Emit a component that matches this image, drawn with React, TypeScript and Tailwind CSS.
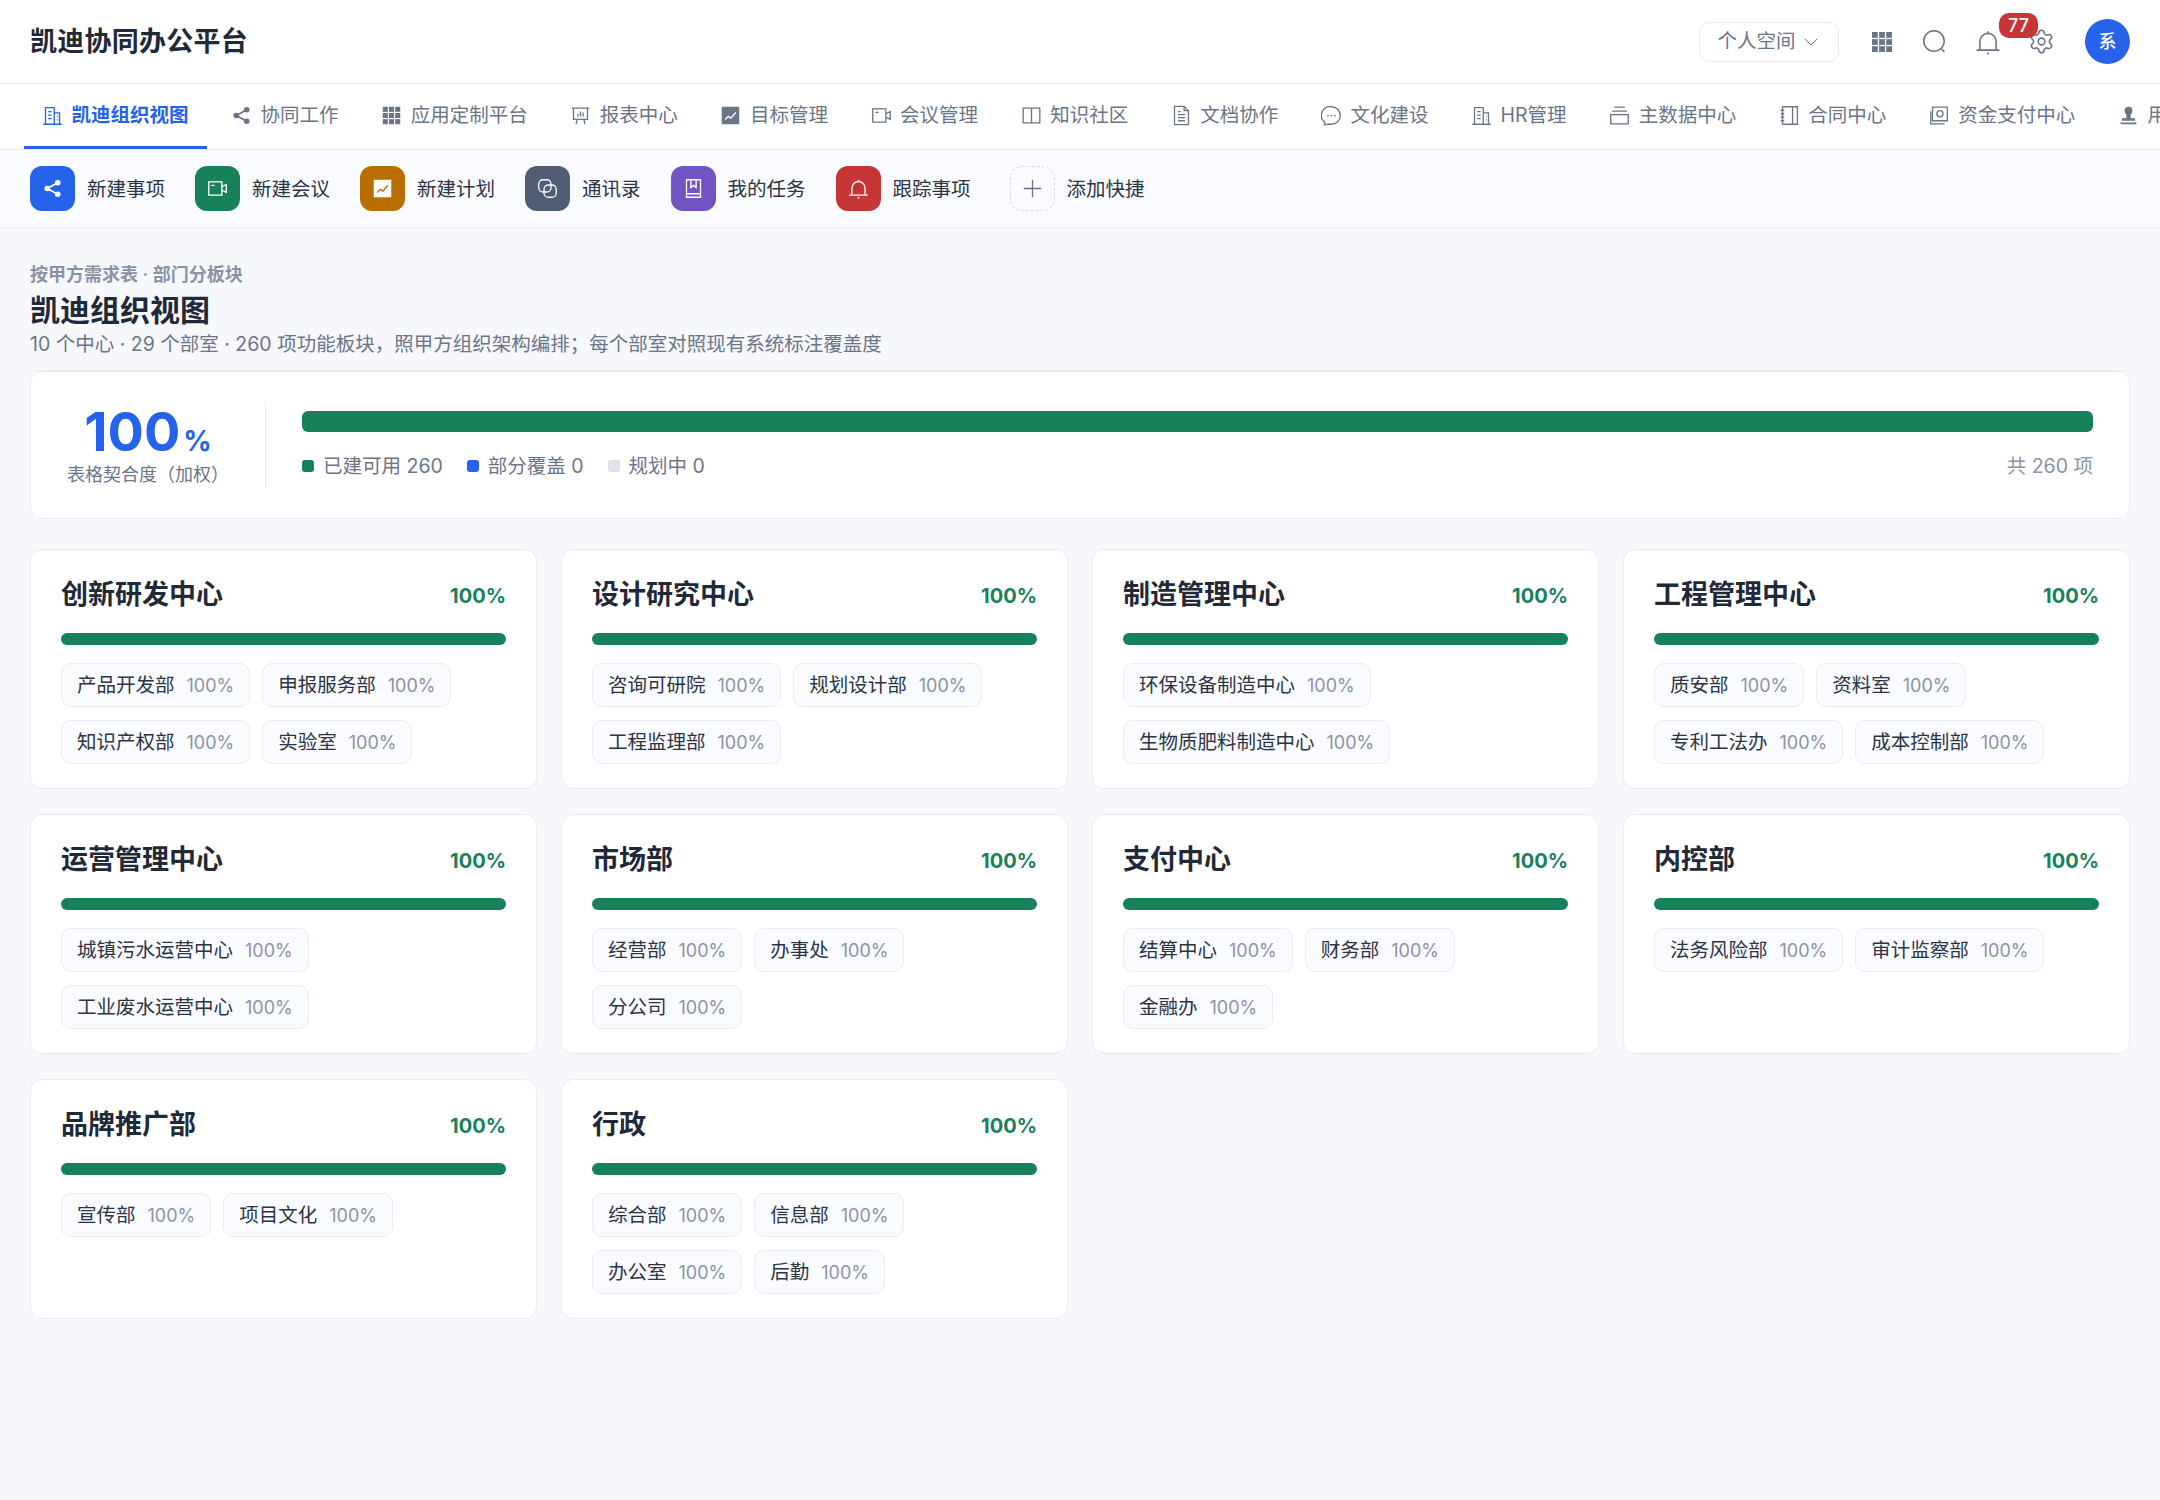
import React from 'react';
import { Settings, ChevronDown } from 'lucide-react';

// --- Icons ---

type IconProps = { className?: string };

const Svg: React.FC<IconProps & { children: React.ReactNode }> = ({ className, children }) => (
  <svg viewBox="0 0 24 24" fill="none" stroke="currentColor" strokeWidth="1.5" className={className}>{children}</svg>
);

const BuildingIcon = (p: IconProps) => (
  <Svg {...p}><path d="M1.5 22h21M4 22V3h10v19M14 9h6v13M7 7.5h4M7 11.5h4M7 15.5h4M17 13h1M17 17h1" /></Svg>
);
const ShareIcon = (p: IconProps) => (
  <Svg {...p}>
    <path d="M18 5.5 6 12l12 6.5" strokeWidth="2" />
    <circle cx="18" cy="5.5" r="3.2" fill="currentColor" stroke="none" />
    <circle cx="6" cy="12" r="3.2" fill="currentColor" stroke="none" />
    <circle cx="18" cy="18.5" r="3.2" fill="currentColor" stroke="none" />
  </Svg>
);
const GridIcon = (p: IconProps) => (
  <svg viewBox="0 0 24 24" fill="currentColor" className={p.className}>
    <rect x="2" y="2" width="5.8" height="5.8" /><rect x="9.1" y="2" width="5.8" height="5.8" /><rect x="16.2" y="2" width="5.8" height="5.8" />
    <rect x="2" y="9.1" width="5.8" height="5.8" /><rect x="9.1" y="9.1" width="5.8" height="5.8" /><rect x="16.2" y="9.1" width="5.8" height="5.8" />
    <rect x="2" y="16.2" width="5.8" height="5.8" /><rect x="9.1" y="16.2" width="5.8" height="5.8" /><rect x="16.2" y="16.2" width="5.8" height="5.8" />
  </svg>
);
const BoardIcon = (p: IconProps) => (
  <Svg {...p}><path d="M2 3.5h20M4 3.5v13h16v-13M8 16.5 7 22M16 16.5l1 5.5M9 13v-3M12 13V7.5M15 13V8.5" /></Svg>
);
const ChartIcon = (p: IconProps) => (
  <svg viewBox="0 0 24 24" className={p.className}>
    <rect x="2" y="2" width="20" height="20" rx="1" fill="currentColor" />
    <path d="M6 16.5l3.5-3.5 3 2L18 8.5" fill="none" stroke="#fff" strokeWidth="1.6" />
  </svg>
);
const VideoIcon = (p: IconProps) => (
  <Svg {...p}><path d="M2 4.5h15v15H2zM5 8.5h3.5M17 10l5-2.5v9L17 14" /></Svg>
);
const BookOpenIcon = (p: IconProps) => (
  <Svg {...p}><path d="M2.5 3.5H12v17H2.5zM12 3.5h9.5v17H12z" /></Svg>
);
const DocIcon = (p: IconProps) => (
  <Svg {...p}><path d="M4 1.5h11l5 5v16H4zM15 1.5v5h5M8 11h8M8 14.5h8M8 18h8M8 7.5h3" /></Svg>
);
const ChatIcon = (p: IconProps) => (
  <svg viewBox="0 0 24 24" fill="none" stroke="currentColor" strokeWidth="1.5" className={p.className}>
    <path d="M12 2a10 10 0 0 1 0 20H6.5c.5 0-1 0-2.500.5.5-1 .5-2 0-3A10 10 0 0 1 12 2z" />
    <circle cx="8" cy="12" r="1" fill="currentColor" stroke="none" />
    <circle cx="12" cy="12" r="1" fill="currentColor" stroke="none" />
    <circle cx="16" cy="12" r="1" fill="currentColor" stroke="none" />
  </svg>
);
const BoxIcon = (p: IconProps) => (
  <Svg {...p}><path d="M6 2.5h12M3.5 7h17M2 11h20v10.5H2z" /></Svg>
);
const NotebookIcon = (p: IconProps) => (
  <Svg {...p}><path d="M4 2h17v20H4zM15.5 2v20M2 6h4M2 10h4M2 14h4M2 18h4" /></Svg>
);
const SafeIcon = (p: IconProps) => (
  <Svg {...p}><path d="M4 2.500h17V18H4zM2 7v14.500h16" /><circle cx="12.5" cy="10" r="3.5" /></Svg>
);
const UserIcon = (p: IconProps) => (
  <svg viewBox="0 0 24 24" fill="currentColor" className={p.className}>
    <circle cx="12" cy="6.5" r="4.5" /><path d="M9.500 10h5v5h5v3h-15v-3h5z" /><rect x="3" y="20" width="18" height="2" />
  </svg>
);
const SearchIcon = (p: IconProps) => (
  <Svg {...p}><circle cx="11.5" cy="11.5" r="9.8" /><path d="m18.5 19 3 3" /></Svg>
);
const BellIcon = (p: IconProps) => (
  <Svg {...p}><path d="M1.500 19.500h21M4.500 19.500v-8a7.500 7.500 0 0 1 15 0v8M12 2v2" /><circle cx="12" cy="22.600" r="1" fill="currentColor" stroke="none" /></Svg>
);
const LinkIcon = (p: IconProps) => (
  <Svg {...p}><rect x="2" y="2" width="14" height="14" rx="5" /><rect x="8" y="8" width="14" height="14" rx="5" /></Svg>
);
const BookIcon = (p: IconProps) => (
  <Svg {...p}><path d="M4 2h16v20H4zM4 18h16M9 2v9l3-2.500 3 2.500V2" /></Svg>
);
const PlusIcon = (p: IconProps) => (
  <Svg {...p}><path d="M12 2v20M2 12h20" /></Svg>
);
const FilledChart = (p: IconProps) => (
  <svg viewBox="0 0 24 24" className={p.className}>
    <rect x="2" y="2" width="20" height="20" fill="#fff" />
    <path d="M6 16.5l3.5-3.500 3 2L18 8.500" fill="none" stroke="#b86e00" strokeWidth="1.6" />
  </svg>
);

// --- Data ---

const tabs = [
  { label: '凯迪组织视图', icon: BuildingIcon, active: true },
  { label: '协同工作', icon: ShareIcon },
  { label: '应用定制平台', icon: GridIcon },
  { label: '报表中心', icon: BoardIcon },
  { label: '目标管理', icon: ChartIcon },
  { label: '会议管理', icon: VideoIcon },
  { label: '知识社区', icon: BookOpenIcon },
  { label: '文档协作', icon: DocIcon },
  { label: '文化建设', icon: ChatIcon },
  { label: 'HR管理', icon: BuildingIcon },
  { label: '主数据中心', icon: BoxIcon },
  { label: '合同中心', icon: NotebookIcon },
  { label: '资金支付中心', icon: SafeIcon },
  { label: '用户管理', icon: UserIcon },
];

const quickLinks = [
  { label: '新建事项', icon: ShareIcon, bg: 'bg-[#2563eb]' },
  { label: '新建会议', icon: VideoIcon, bg: 'bg-[#17825a]' },
  { label: '新建计划', icon: FilledChart, bg: 'bg-[#b86e00]' },
  { label: '通讯录', icon: LinkIcon, bg: 'bg-[#4f5d75]' },
  { label: '我的任务', icon: BookIcon, bg: 'bg-[#7154c4]' },
  { label: '跟踪事项', icon: BellIcon, bg: 'bg-[#c73535]' },
];

const centers = [
  { name: '创新研发中心', depts: ['产品开发部', '申报服务部', '知识产权部', '实验室'] },
  { name: '设计研究中心', depts: ['咨询可研院', '规划设计部', '工程监理部'] },
  { name: '制造管理中心', depts: ['环保设备制造中心', '生物质肥料制造中心'] },
  { name: '工程管理中心', depts: ['质安部', '资料室', '专利工法办', '成本控制部'] },
  { name: '运营管理中心', depts: ['城镇污水运营中心', '工业废水运营中心'] },
  { name: '市场部', depts: ['经营部', '办事处', '分公司'] },
  { name: '支付中心', depts: ['结算中心', '财务部', '金融办'] },
  { name: '内控部', depts: ['法务风险部', '审计监察部'] },
  { name: '品牌推广部', depts: ['宣传部', '项目文化'] },
  { name: '行政', depts: ['综合部', '信息部', '办公室', '后勤'] },
];

// --- Main Component ---

export default function App() {
  return (
    <div className="min-h-screen bg-[#f6f8fc] font-['Inter','Noto_Sans_CJK_SC',sans-serif] text-[#1f2937]">
      {/* Header */}
      <header className="h-[84px] bg-white border-b border-[#e8ebf2] px-[30px] flex items-center justify-between">
        <h1 className="text-[27px] font-semibold tracking-[0.25px] pt-[2px]">凯迪协同办公平台</h1>
        <div className="flex items-center text-[#6b7588]">
          <button className="w-[140px] h-[40px] border border-[#e8ebf2] rounded-[10px] flex items-center justify-center gap-[3px] text-[19.5px] pl-[2px]">
            个人空间 <ChevronDown className="w-[24px] h-[24px]" strokeWidth={1} />
          </button>
          <GridIcon className="w-[24px] h-[24px] ml-[31px]" />
          <SearchIcon className="w-[25px] h-[25px] ml-[28px]" />
          <div className="relative ml-[28px]">
            <BellIcon className="w-[26px] h-[26px]" />
            <span className="absolute -top-[16px] left-[24px] w-[39px] h-[25px] rounded-[10px] bg-[#c73535] text-white text-[18px] font-medium flex items-center justify-center">77</span>
          </div>
          <Settings className="w-[27px] h-[27px] ml-[27px]" strokeWidth={1.4} />
          <div className="w-[45px] h-[45px] ml-[30px] rounded-full bg-[#2563eb] text-white text-[18px] font-medium flex items-center justify-center">系</div>
        </div>
      </header>

      {/* Tabs */}
      <nav className="h-[66px] bg-white border-b border-[#e8ebf2] pl-[24px] flex gap-[6.6px] overflow-hidden whitespace-nowrap">
        {tabs.map((tab) => {
          const Icon = tab.icon;
          return (
            <div
              key={tab.label}
              className={`h-[65px] shrink-0 px-[18px] flex items-center gap-[8.5px] text-[19.5px] border-b-[3px] ${tab.active ? 'text-[#2563eb] font-semibold border-[#2563eb]' : 'text-[#6b7588] border-transparent'}`}
            >
              <Icon className="w-[21px] h-[21px] shrink-0" />
              <span className="pt-px">{tab.label}</span>
            </div>
          );
        })}
      </nav>

      {/* Quick links */}
      <div className="h-[78px] bg-[#fafbfe] border-b border-[#e8ebf2] pl-[30px] flex items-center gap-[30px]">
        {quickLinks.map((item) => {
          const Icon = item.icon;
          return (
            <div key={item.label} className="flex items-center gap-[12px]">
              <div className={`w-[45px] h-[45px] rounded-[12px] flex items-center justify-center text-white ${item.bg}`}>
                <Icon className="w-[21px] h-[21px]" />
              </div>
              <span className="text-[19.5px] text-[#2b3445] pt-[2px]">{item.label}</span>
            </div>
          );
        })}
        <div className="flex items-center gap-[12px] ml-[9px]">
          <div className="w-[45px] h-[45px] rounded-[12px] border border-dashed border-[#d5dae6] flex items-center justify-center text-[#6b7588]">
            <PlusIcon className="w-[21px] h-[21px]" />
          </div>
          <span className="text-[19.5px] text-[#2b3445] pt-[2px]">添加快捷</span>
        </div>
      </div>

      {/* Content */}
      <main className="px-[30px] pt-[34px]">
        <div className="h-[109px] border-b border-[#e8ebf2]">
          <div className="text-[18px] leading-[26px] font-semibold text-[#8a93a6]">按甲方需求表 · 部门分板块</div>
          <h2 className="text-[30px] leading-[40px] mt-[2px] font-bold">凯迪组织视图</h2>
          <p className="text-[19.5px] leading-[28px] text-[#6b7588]">10 个中心 · 29 个部室 · 260 项功能板块，照甲方组织架构编排；每个部室对照现有系统标注覆盖度</p>
        </div>

        {/* Summary */}
        <section className="h-[148px] bg-white border border-[#e8ebf2] rounded-[12px] px-[36px] py-[29px] flex items-center gap-[36px]">
          <div className="w-[162px] shrink-0 flex flex-col items-center pt-[6px]">
            <div className="flex items-baseline text-[#2563eb] font-bold leading-[44px]">
              <span className="text-[54px]">100</span>
              <span className="text-[28px] ml-[3px]">%</span>
            </div>
            <div className="text-[18px] leading-[24px] text-[#6b7588] whitespace-nowrap">表格契合度（加权）</div>
          </div>
          <div className="w-px h-[86px] bg-[#e8ebf2] shrink-0" />
          <div className="flex-1">
            <div className="h-[21px] rounded-[6px] bg-[#17825a]" />
            <div className="mt-[20px] flex items-center text-[19.5px] leading-[28px] text-[#6b7588]">
              <span className="w-[12px] h-[12px] rounded-[3px] bg-[#17825a] mr-[9px]" />已建可用 260
              <span className="w-[12px] h-[12px] rounded-[3px] bg-[#2563eb] ml-[24px] mr-[9px]" />部分覆盖 0
              <span className="w-[12px] h-[12px] rounded-[3px] bg-[#dde1ea] ml-[24px] mr-[9px]" />规划中 0
              <span className="ml-auto text-[#8a93a6]">共 260 项</span>
            </div>
          </div>
        </section>

        {/* Centers */}
        <div className="mt-[30px] grid grid-cols-4 gap-x-[24px] gap-y-[25px] auto-rows-[240px]">
          {centers.map((c) => (
            <section key={c.name} className="bg-white border border-[#e8ebf2] rounded-[12px] px-[30px] pt-[27px]">
              <div className="h-[36px] flex items-center justify-between">
                <h3 className="text-[27px] font-semibold">{c.name}</h3>
                <span className="text-[20px] font-bold text-[#17825a] pt-px">100%</span>
              </div>
              <div className="mt-[20px] h-[12px] rounded-full bg-[#17825a]" />
              <div className="mt-[18px] flex flex-wrap gap-x-[12px] gap-y-[13px]">
                {c.depts.map((d) => (
                  <div key={d} className="h-[44px] pl-[15px] pr-[15px] bg-[#fafbfe] border border-[#e8ebf2] rounded-[10px] flex items-center gap-[12px] whitespace-nowrap">
                    <span className="text-[19.5px] text-[#2b3445] pt-px">{d}</span>
                    <span className="text-[18px] text-[#8a93a6]">100%</span>
                  </div>
                ))}
              </div>
            </section>
          ))}
        </div>
      </main>
    </div>
  );
}
